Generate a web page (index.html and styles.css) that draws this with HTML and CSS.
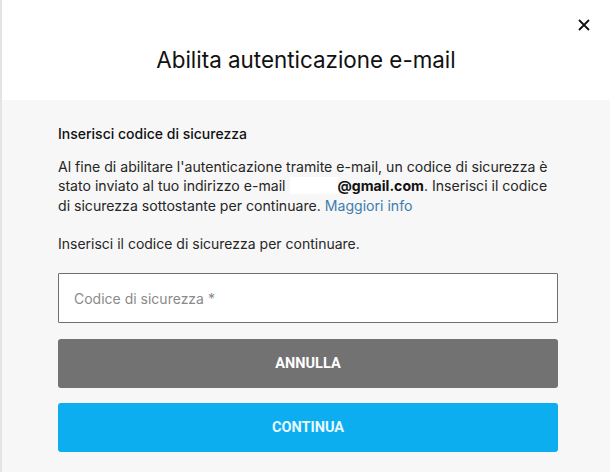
FILE: index.html
```html
<!DOCTYPE html>
<html>
  <head>
    <title>Abilita autenticazione e-mail</title>
    <link rel="stylesheet" href="styles.css">
  </head>
  <body>
    <div class="modal">
      <div class="modal-header">
        <h1 class="modal-title">Abilita autenticazione e-mail</h1>
        <button class="close-button" aria-label="Chiudi">
          <svg width="12" height="12" viewBox="0 0 12 12">
            <path d="M1 1 L11 11 M11 1 L1 11" stroke="#111" stroke-width="1.8" fill="none"/>
          </svg>
        </button>
      </div>

      <div class="modal-body">
        <p class="section-title">Inserisci codice di sicurezza</p>
        <p class="description">
          Al fine di abilitare l'autenticazione tramite e-mail, un codice di sicurezza è
          stato inviato al tuo indirizzo e-mail <span class="hidden-mail"></span><b>@gmail.com</b>. Inserisci il codice
          di sicurezza sottostante per continuare. <a class="more-link" href="#">Maggiori info</a>
        </p>
        <p class="hint">Inserisci il codice di sicurezza per continuare.</p>

        <input class="code-input" type="text" placeholder="Codice di sicurezza *">

        <button class="action-button cancel-button">ANNULLA</button>
        <button class="action-button continue-button">CONTINUA</button>
      </div>
    </div>
  </body>
</html>
```

FILE: styles.css
```css
body{
  margin: 0;
  background-color: #f7f7f7;
  font-family: Inter, "Noto Sans", Arial, sans-serif;
  color: #262626;
}
p{
  margin: 0;
}
.modal{
  border-left: 2px solid #e4e4e4;
  min-height: 472px;
  box-sizing: border-box;
}
.modal-header{
  position: relative;
  height: 100px;
  background-color: white;
  display: flex;
  justify-content: center;
  align-items: center;
}
.modal-title{
  margin: 0;
  padding-top: 18px;
  font-size: 22.4px;
  font-weight: 400;
  color: #111;
}
.close-button{
  position: absolute;
  top: 17px;
  right: 18px;
  width: 16px;
  height: 16px;
  padding: 0;
  border: none;
  background: none;
  display: flex;
  align-items: center;
  justify-content: center;
}
.modal-body{
  display: flex;
  flex-direction: column;
  padding: 24px 52px 0 56px;
}
.section-title{
  font-size: 14px;
  line-height: 20px;
  font-weight: 500;
  color: #111;
}
.description{
  margin-top: 13px;
  font-size: 14.1px;
  line-height: 19.4px;
}
.description b{
  font-weight: 700;
  color: #111;
}
.hidden-mail{
  padding: 0 24px;
  background-color: white;
}
.more-link{
  color: #3b7eaf;
  text-decoration: none;
}
.hint{
  margin-top: 19px;
  font-size: 14px;
  line-height: 20px;
}
.code-input{
  margin-top: 19px;
  height: 50px;
  box-sizing: border-box;
  border: 1px solid #6f6f6f;
  border-radius: 1px;
  background-color: white;
  padding: 0 15px;
  font-family: Inter, "Noto Sans", Arial, sans-serif;
  font-size: 14px;
}
.code-input::placeholder{
  color: #8a8a8a;
}
.action-button{
  height: 49px;
  border: none;
  border-radius: 3px;
  font-family: Roboto, Arial, sans-serif;
  font-weight: 700;
  font-size: 14.5px;
  color: white;
}
.cancel-button{
  margin-top: 16px;
  background-color: #727272;
}
.continue-button{
  margin-top: 15px;
  background-color: #0daeef;
  color: #e8f8ff;
}
```
